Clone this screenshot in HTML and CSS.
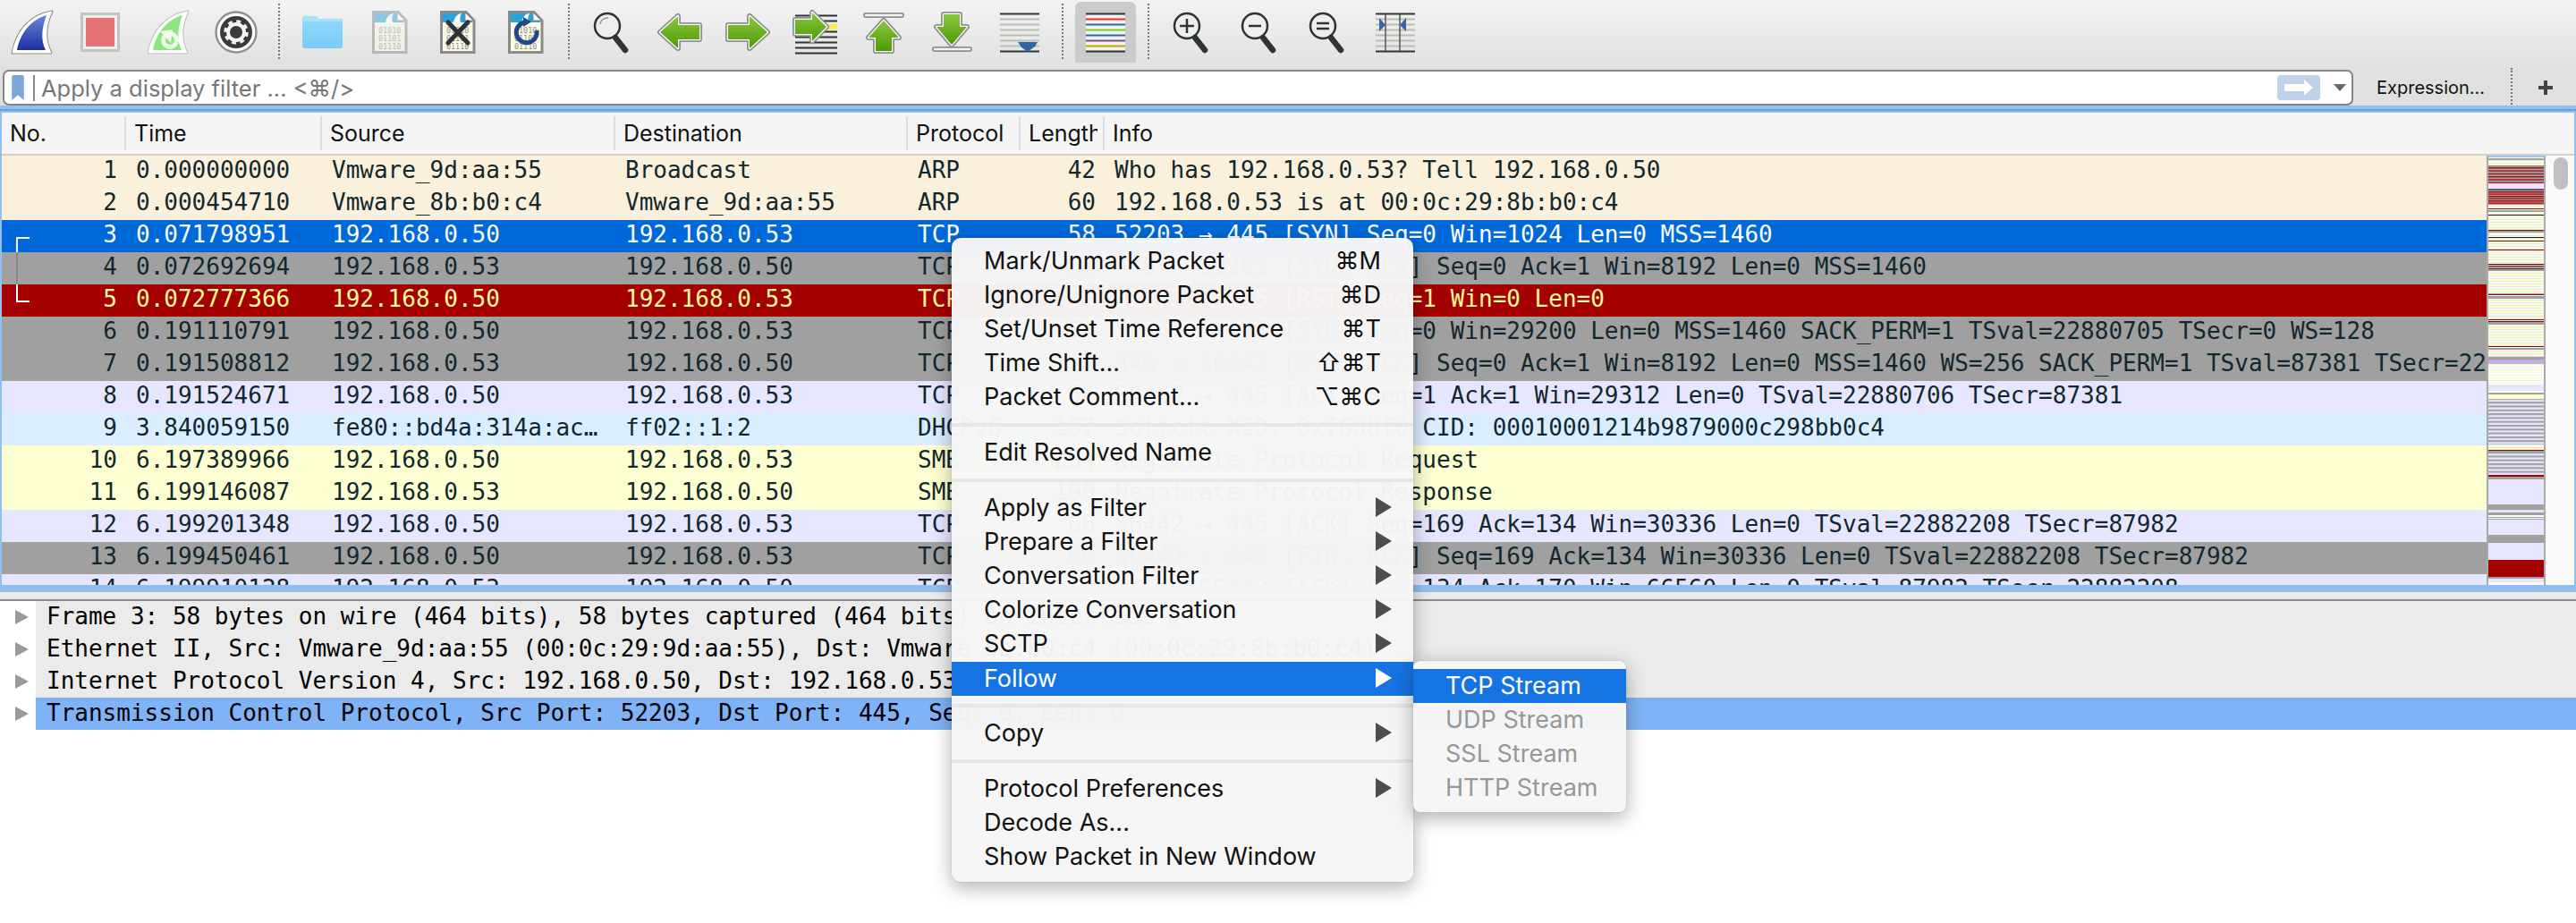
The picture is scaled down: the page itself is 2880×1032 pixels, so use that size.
FILE: index.html
```html
<!DOCTYPE html>
<html lang="en">
<head>
    <meta charset="UTF-8">
    <title>Wireshark</title>
    <link rel="stylesheet" href="styles.css">
</head>
<body>
    <svg class="defs" width="0" height="0">
        <defs>
            <linearGradient id="fin-blue" x1="0" y1="0" x2="0" y2="1"><stop offset="0" stop-color="#6a86dc"/><stop offset="1" stop-color="#1b2f9f"/></linearGradient>
            <linearGradient id="go-green" x1="0" y1="0" x2="0" y2="1"><stop offset="0" stop-color="#8ac73e"/><stop offset="1" stop-color="#4e9a06"/></linearGradient>
            <linearGradient id="folder-blue" x1="0" y1="0" x2="0" y2="1"><stop offset="0" stop-color="#93dafc"/><stop offset="1" stop-color="#78ccf8"/></linearGradient>
            <symbol id="arrow-left" viewBox="0 0 68 68">
                <path class="ar-out" d="M12 34 32 16V26H56V42H32V52Z"/>
                <path class="ar-in" d="M12 34 32 16V26H56V42H32V52Z"/>
                <path class="ar-fill" d="M12 34 32 16V26H56V42H32V52Z"/>
            </symbol>
            <symbol id="file" viewBox="0 0 68 68">
                <path class="file-page" d="M15.5 11.5H43L52 21V56.5H15.5Z"/>
                <path class="file-top" d="M17 13H42L50 21V23H17Z"/>
                <path class="file-fin" d="M29 23C30 17 34 13 38 13 36 17 36 20 37 23Z"/>
                <path class="file-ear" d="M42 12V21H51Z"/>
                <text class="file-bits" x="21" y="35">01010</text>
                <text class="file-bits" x="21" y="44">01101</text>
                <text class="file-bits" x="21" y="53">01110</text>
            </symbol>
            <symbol id="lens" viewBox="0 0 68 68">
                <circle class="lens-glass" cx="29" cy="27" r="14"/>
                <path class="lens-grip" d="M38 40 49 54"/>
            </symbol>
        </defs>
    </svg>

    <div class="toolbar">
        <div class="tool"><svg viewBox="0 0 68 68"><path class="fin-out" d="M12 57C17 32 32 15 56 11 49 25 47 42 55 57Z"/><path class="fin-in" d="M12 57C17 32 32 15 56 11 49 25 47 42 55 57Z"/><path fill="url(#fin-blue)" d="M17 54C21 34 33 20 50 15 45 28 43 42 49 54Z"/></svg></div>
        <div class="tool"><svg viewBox="0 0 68 68"><rect x="13.5" y="13.5" width="41" height="41" fill="#efefef" stroke="#c4c4c4" stroke-width="3"/><rect x="18" y="18" width="32" height="32" fill="#e57373"/></svg></div>
        <div class="tool"><svg viewBox="0 0 68 68"><path class="fin-out pale" d="M12 57C17 32 32 15 56 11 49 25 47 42 55 57Z"/><path class="fin-in" d="M12 57C17 32 32 15 56 11 49 25 47 42 55 57Z"/><path fill="#8ce680" d="M17 54C21 34 33 20 50 15 45 28 43 42 49 54Z"/><circle cx="36" cy="43" r="7.5" fill="none" stroke="#eefbea" stroke-width="5"/><path fill="#eefbea" d="M25 33 39 31 37 46Z"/></svg></div>
        <div class="tool"><svg viewBox="0 0 68 68"><circle cx="34" cy="34" r="22.5" fill="#fff" stroke="#929292" stroke-width="2.5"/><circle cx="34" cy="34" r="18" fill="#3b3b3b"/><circle cx="34" cy="34" r="11.5" fill="none" stroke="#f4f4f4" stroke-width="4.5" stroke-dasharray="4.6 4.43"/><circle cx="34" cy="34" r="9" fill="none" stroke="#f4f4f4" stroke-width="4"/></svg></div>
        <span class="tool-sep"></span>
        <div class="tool"><svg viewBox="0 0 68 68"><path fill="url(#folder-blue)" d="M12 19C12 17 13 16 15 16H26C28 16 29 17 30 19H55C56 19 57 20 57 21V50C57 51 56 52 55 52H14C13 52 12 51 12 50Z"/><path fill="#a6e0fb" d="M12 19C12 17 13 16 15 16H26C28 16 29 17 30 19H55C56 19 57 20 57 22H12Z"/></svg></div>
        <div class="tool"><svg viewBox="0 0 68 68" class="faded"><use href="#file"/></svg></div>
        <div class="tool"><svg viewBox="0 0 68 68"><use href="#file"/><path class="file-mark" d="M23 23 45 46M45 23 23 46"/></svg></div>
        <div class="tool"><svg viewBox="0 0 68 68"><use href="#file"/><path class="file-mark blue" d="M32 23A11.5 11.5 0 1 0 46 32"/><path fill="#204a87" d="M31 17 40 22.500 31 28Z"/></svg></div>
        <span class="tool-sep"></span>
        <div class="tool"><svg viewBox="0 0 68 68"><use href="#lens"/><path fill="none" stroke="#999" stroke-width="1.500" d="M21 25C22 20 26 18 30 18"/></svg></div>
        <div class="tool"><svg viewBox="0 0 68 68"><use href="#arrow-left"/></svg></div>
        <div class="tool"><svg viewBox="0 0 68 68"><use href="#arrow-left" transform="matrix(-1 0 0 1 68 0)"/></svg></div>
        <div class="tool"><svg viewBox="0 0 68 68">
            <path class="line dark" d="M11 15.500H58M11 21.500H58M11 33.500H58M11 39.500H58M11 45.500H58M11 51.500H58M11 57.500H58"/>
            <rect x="40" y="25" width="18" height="6" fill="#fce94f"/>
            <path class="ar-out" d="M46 28 30 12V20H11V36H30V44Z"/><path class="ar-in" d="M46 28 30 12V20H11V36H30V44Z"/><path class="ar-fill" d="M46 28 30 12V20H11V36H30V44Z"/>
        </svg></div>
        <div class="tool"><svg viewBox="0 0 68 68">
            <path class="ar-out thin" d="M14 15H54"/><path class="bar-in" d="M14 15H54"/>
            <path class="ar-out" d="M34 21 17 40H25V55H43V40H51Z"/><path class="ar-in" d="M34 21 17 40H25V55H43V40H51Z"/><path class="ar-fill" d="M34 21 17 40H25V55H43V40H51Z"/>
        </svg></div>
        <div class="tool"><svg viewBox="0 0 68 68">
            <path class="ar-out thin" d="M15 53H54"/><path class="bar-in" d="M15 53H54"/>
            <path class="ar-out" d="M34 48 17 28H25V14H43V28H51Z"/><path class="ar-in" d="M34 48 17 28H25V14H43V28H51Z"/><path class="ar-fill" d="M34 48 17 28H25V14H43V28H51Z"/>
        </svg></div>
        <div class="tool"><svg viewBox="0 0 68 68">
            <path class="line pale" d="M12 19.500H56M12 25.500H56M12 31.500H56M12 37.500H56M12 43.500H56M12 49.500H56"/>
            <path class="line dark" d="M12 13.500H56M12 55.500H56"/>
            <path fill="#3465a4" d="M32 45H54L51 50 43 56 36 51Z"/>
        </svg></div>
        <span class="tool-sep"></span>
        <div class="tool active"><svg viewBox="0 0 68 68">
            <rect x="12" y="13" width="44" height="43" fill="#f2f2f0"/>
            <path class="line dark" d="M12 13.500H56M12 55.500H56"/>
            <path class="line" stroke="#ef2929" d="M12 19.500H56"/>
            <path class="line" stroke="#3465a4" d="M12 25.500H56"/>
            <path class="line" stroke="#73d216" d="M12 31.500H56"/>
            <path class="line" stroke="#3465a4" d="M12 37.500H56"/>
            <path class="line" stroke="#75507b" d="M12 43.500H56"/>
            <path class="line" stroke="#c4a000" d="M12 49.500H56"/>
        </svg></div>
        <span class="tool-sep"></span>
        <div class="tool"><svg viewBox="0 0 68 68"><use href="#lens"/><path class="lens-mark" d="M21 27H37M29 19V35"/></svg></div>
        <div class="tool"><svg viewBox="0 0 68 68"><use href="#lens"/><path class="lens-mark" d="M22 27H36"/></svg></div>
        <div class="tool"><svg viewBox="0 0 68 68"><use href="#lens"/><path class="lens-mark" d="M22 24H36M22 30H36"/></svg></div>
        <div class="tool"><svg viewBox="0 0 68 68">
            <path class="line pale" d="M12 19.500H56M12 25.500H56M12 31.500H56M12 37.500H56M12 43.500H56M12 49.500H56"/>
            <path class="line dark" d="M12 13.500H56M12 55.500H56"/>
            <path stroke="#555" stroke-width="1.500" d="M23 14V55M39 14V55"/>
            <path fill="#3465a4" d="M16 18 23 26 16 33ZM46 18 39 26 46 33Z"/>
        </svg></div>
    </div>

    <div class="filterbar">
        <div class="filter-field">
            <svg class="bookmark" viewBox="0 0 16 30"><path fill="#7ba7d7" d="M1 2C1 1 2 0 3 0H13C14 0 15 1 15 2V29L8 23 1 29Z"/></svg>
            <span class="filter-text">Apply a display filter ... &lt;⌘/&gt;</span>
            <span class="apply-btn"><svg viewBox="0 0 34 18" width="34" height="18"><path fill="#fff" d="M1 6C1 5 2 5 2 5H23V0L33 9 23 18V13H2C2 13 1 13 1 12Z"/></svg></span>
            <span class="filter-drop"></span>
        </div>
        <span class="expr">Expression...</span>
        <span class="tool-sep short"></span>
        <span class="plus"></span>
    </div>

    <div class="packet-pane">
        <div class="list-head">
            <div class="hcell c-no"><span>No.</span></div>
            <div class="hcell c-time"><span>Time</span></div>
            <div class="hcell c-src"><span>Source</span></div>
            <div class="hcell c-dst"><span>Destination</span></div>
            <div class="hcell c-proto"><span>Protocol</span></div>
            <div class="hcell c-len"><span>Length</span></div>
            <div class="hcell c-info"><span>Info</span></div>
        </div>
        <div class="list-body">
            <div class="rows">
                <div class="row arp"><div class="c-no">1</div><div class="c-time">0.000000000</div><div class="c-src">Vmware_9d:aa:55</div><div class="c-dst">Broadcast</div><div class="c-proto">ARP</div><div class="c-len">42</div><div class="c-info">Who has 192.168.0.53? Tell 192.168.0.50</div></div>
                <div class="row arp"><div class="c-no">2</div><div class="c-time">0.000454710</div><div class="c-src">Vmware_8b:b0:c4</div><div class="c-dst">Vmware_9d:aa:55</div><div class="c-proto">ARP</div><div class="c-len">60</div><div class="c-info">192.168.0.53 is at 00:0c:29:8b:b0:c4</div></div>
                <div class="row picked"><div class="c-no"><i class="rel rel-first"></i>3</div><div class="c-time">0.071798951</div><div class="c-src">192.168.0.50</div><div class="c-dst">192.168.0.53</div><div class="c-proto">TCP</div><div class="c-len">58</div><div class="c-info">52203 → 445 [SYN] Seq=0 Win=1024 Len=0 MSS=1460</div></div>
                <div class="row syn"><div class="c-no"><i class="rel rel-mid"></i>4</div><div class="c-time">0.072692694</div><div class="c-src">192.168.0.53</div><div class="c-dst">192.168.0.50</div><div class="c-proto">TCP</div><div class="c-len">58</div><div class="c-info">445 → 52203 [SYN, ACK] Seq=0 Ack=1 Win=8192 Len=0 MSS=1460</div></div>
                <div class="row rst"><div class="c-no"><i class="rel rel-last"></i>5</div><div class="c-time">0.072777366</div><div class="c-src">192.168.0.50</div><div class="c-dst">192.168.0.53</div><div class="c-proto">TCP</div><div class="c-len">54</div><div class="c-info">52203 → 445 [RST] Seq=1 Win=0 Len=0</div></div>
                <div class="row syn"><div class="c-no">6</div><div class="c-time">0.191110791</div><div class="c-src">192.168.0.50</div><div class="c-dst">192.168.0.53</div><div class="c-proto">TCP</div><div class="c-len">74</div><div class="c-info">56442 → 445 [SYN] Seq=0 Win=29200 Len=0 MSS=1460 SACK_PERM=1 TSval=22880705 TSecr=0 WS=128</div></div>
                <div class="row syn"><div class="c-no">7</div><div class="c-time">0.191508812</div><div class="c-src">192.168.0.53</div><div class="c-dst">192.168.0.50</div><div class="c-proto">TCP</div><div class="c-len">74</div><div class="c-info">445 → 56442 [SYN, ACK] Seq=0 Ack=1 Win=8192 Len=0 MSS=1460 WS=256 SACK_PERM=1 TSval=87381 TSecr=22880705</div></div>
                <div class="row ack"><div class="c-no">8</div><div class="c-time">0.191524671</div><div class="c-src">192.168.0.50</div><div class="c-dst">192.168.0.53</div><div class="c-proto">TCP</div><div class="c-len">66</div><div class="c-info">56442 → 445 [ACK] Seq=1 Ack=1 Win=29312 Len=0 TSval=22880706 TSecr=87381</div></div>
                <div class="row dhcp"><div class="c-no">9</div><div class="c-time">3.840059150</div><div class="c-src">fe80::bd4a:314a:ac…</div><div class="c-dst">ff02::1:2</div><div class="c-proto">DHCPv6</div><div class="c-len">157</div><div class="c-info">Solicit XID: 0xf608f0 CID: 00010001214b9879000c298bb0c4</div></div>
                <div class="row smb"><div class="c-no">10</div><div class="c-time">6.197389966</div><div class="c-src">192.168.0.50</div><div class="c-dst">192.168.0.53</div><div class="c-proto">SMB</div><div class="c-len">234</div><div class="c-info">Negotiate Protocol Request</div></div>
                <div class="row smb"><div class="c-no">11</div><div class="c-time">6.199146087</div><div class="c-src">192.168.0.53</div><div class="c-dst">192.168.0.50</div><div class="c-proto">SMB</div><div class="c-len">199</div><div class="c-info">Negotiate Protocol Response</div></div>
                <div class="row ack"><div class="c-no">12</div><div class="c-time">6.199201348</div><div class="c-src">192.168.0.50</div><div class="c-dst">192.168.0.53</div><div class="c-proto">TCP</div><div class="c-len">66</div><div class="c-info">56442 → 445 [ACK] Seq=169 Ack=134 Win=30336 Len=0 TSval=22882208 TSecr=87982</div></div>
                <div class="row syn"><div class="c-no">13</div><div class="c-time">6.199450461</div><div class="c-src">192.168.0.50</div><div class="c-dst">192.168.0.53</div><div class="c-proto">TCP</div><div class="c-len">66</div><div class="c-info">56442 → 445 [FIN, ACK] Seq=169 Ack=134 Win=30336 Len=0 TSval=22882208 TSecr=87982</div></div>
                <div class="row ack"><div class="c-no">14</div><div class="c-time">6.199910128</div><div class="c-src">192.168.0.53</div><div class="c-dst">192.168.0.50</div><div class="c-proto">TCP</div><div class="c-len">66</div><div class="c-info">445 → 56442 [ACK] Seq=134 Ack=170 Win=66560 Len=0 TSval=87982 TSecr=22882208</div></div>
            </div>
            <svg class="minimap" viewBox="0 0 64 480" preserveAspectRatio="none">
                <defs>
                    <pattern id="st-red" width="64" height="3.300" patternUnits="userSpaceOnUse"><rect width="64" height="3.300" fill="#a0a0a0"/><rect width="64" height="1.200" fill="#a40000"/></pattern>
                    <pattern id="st-redfine" width="64" height="2.500" patternUnits="userSpaceOnUse"><rect width="64" height="2.500" fill="#b0a0a0"/><rect width="64" height="1.300" fill="#a40000"/></pattern>
                    <pattern id="st-yel" width="64" height="3" patternUnits="userSpaceOnUse"><rect width="64" height="3" fill="#feffd0"/><rect y="2" width="64" height="1" fill="#e7e6ff"/></pattern>
                    <pattern id="st-gray" width="64" height="4.300" patternUnits="userSpaceOnUse"><rect width="64" height="4.300" fill="#e7e6ff"/><rect width="64" height="2" fill="#a0a0a0"/></pattern>
                </defs>
                <rect width="64" height="480" fill="#fff"/>
                <rect y="0" width="64" height="2" fill="#9cc4ee"/><rect y="2" width="64" height="1" fill="#fff"/><rect y="3" width="64" height="2" fill="#a0a0a0"/>
                <rect y="5" width="64" height="6" fill="url(#st-yel)"/>
                <rect y="11" width="64" height="20" fill="url(#st-red)"/>
                <rect y="31" width="64" height="6" fill="#f8e0ff"/>
                <rect y="37" width="64" height="2" fill="#56606a"/>
                <rect y="39" width="64" height="16" fill="url(#st-redfine)"/>
                <rect y="55" width="64" height="4" fill="url(#st-yel)"/><rect y="59" width="64" height="1" fill="#a40000"/><rect y="61" width="64" height="2" fill="#a0a0a0"/>
                <rect y="63" width="64" height="20" fill="url(#st-yel)"/><rect y="66" width="64" height="1" fill="#12272e"/>
                <rect y="83" width="64" height="1" fill="#a40000"/><rect y="84" width="64" height="2" fill="#a0a0a0"/>
                <rect y="86" width="64" height="35" fill="url(#st-yel)"/><rect y="91" width="64" height="1" fill="#12272e"/><rect y="95" width="64" height="1" fill="#a40000"/><rect y="105" width="64" height="1" fill="#a40000"/>
                <rect y="121" width="64" height="1" fill="#a40000"/><rect y="122" width="64" height="2" fill="#a0a0a0"/><rect y="124" width="64" height="1" fill="#a40000"/><rect y="126" width="64" height="1" fill="#12272e"/><rect y="127" width="64" height="2" fill="#a0a0a0"/>
                <rect y="129" width="64" height="25" fill="url(#st-yel)"/>
                <rect y="154" width="64" height="1" fill="#a0a0a0"/><rect y="155" width="64" height="1" fill="#a40000"/><rect y="157" width="64" height="3" fill="#a0a0a0"/>
                <rect y="160" width="64" height="23" fill="url(#st-yel)"/>
                <rect y="183" width="64" height="1" fill="#a40000"/><rect y="185" width="64" height="1" fill="#a40000"/><rect y="186" width="64" height="3" fill="#a0a0a0"/>
                <rect y="189" width="64" height="24" fill="url(#st-yel)"/>
                <rect y="213" width="64" height="1" fill="#a40000"/><rect y="215" width="64" height="2" fill="#a0a0a0"/>
                <rect y="217" width="64" height="8" fill="url(#st-yel)"/>
                <rect y="225" width="64" height="3" fill="#a0a0a0"/><rect y="228" width="64" height="2" fill="#c9a0f2"/><rect y="230" width="64" height="3" fill="#b8b8c8"/>
                <rect y="233" width="64" height="23" fill="url(#st-yel)" opacity=".6"/>
                <rect y="256" width="64" height="7" fill="#e7e6ff"/>
                <rect y="263" width="64" height="1" fill="#feffd0"/><rect y="265" width="64" height="2" fill="#a0a0a0"/><rect y="267" width="64" height="5" fill="#feffd0"/>
                <rect y="272" width="64" height="51" fill="url(#st-gray)"/>
                <rect y="323" width="64" height="6" fill="url(#st-yel)"/>
                <rect y="329" width="64" height="1" fill="#a40000"/><rect y="330" width="64" height="3" fill="#a0a0a0"/>
                <rect y="333" width="64" height="24" fill="url(#st-gray)"/>
                <rect y="357" width="64" height="2" fill="#a40000"/><rect y="359" width="64" height="3" fill="#a0a0a0"/>
                <rect y="362" width="64" height="28" fill="#e7e6ff"/>
                <rect y="390" width="64" height="6" fill="#a0a0a0"/>
                <rect y="396" width="64" height="3" fill="#e7e6ff"/><rect y="399" width="64" height="3" fill="#a0a0a0"/><rect y="404" width="64" height="1" fill="#a0a0a0"/><rect y="406" width="64" height="1" fill="#a0a0a0"/>
                <rect y="407" width="64" height="17" fill="#e7e6ff"/>
                <rect y="424" width="64" height="9" fill="#a0a0a0"/>
                <rect y="433" width="64" height="19" fill="#e7e6ff"/>
                <rect y="452" width="64" height="19" fill="#a40000"/>
                <rect y="471" width="64" height="2" fill="#a0a0a0"/><rect y="473" width="64" height="4" fill="#e7e6ff"/>
            </svg>
            <div class="scroll"><div class="scroll-thumb"></div></div>
        </div>
    </div>

    <div class="pane-gap"></div>

    <div class="detail-pane">
        <div class="tree-row"><span class="twist"></span><div class="tree-text">Frame 3: 58 bytes on wire (464 bits), 58 bytes captured (464 bits) on interface 0</div></div>
        <div class="tree-row"><span class="twist"></span><div class="tree-text">Ethernet II, Src: Vmware_9d:aa:55 (00:0c:29:9d:aa:55), Dst: Vmware_8b:b0:c4 (00:0c:29:8b:b0:c4)</div></div>
        <div class="tree-row"><span class="twist"></span><div class="tree-text">Internet Protocol Version 4, Src: 192.168.0.50, Dst: 192.168.0.53</div></div>
        <div class="tree-row"><span class="twist"></span><div class="tree-text picked">Transmission Control Protocol, Src Port: 52203, Dst Port: 445, Seq: 0, Len: 0</div></div>
    </div>

    <div class="menu main-menu">
        <div class="item"><span>Mark/Unmark Packet</span><span class="keys">⌘M</span></div>
        <div class="item"><span>Ignore/Unignore Packet</span><span class="keys">⌘D</span></div>
        <div class="item"><span>Set/Unset Time Reference</span><span class="keys">⌘T</span></div>
        <div class="item"><span>Time Shift...</span><span class="keys">⇧⌘T</span></div>
        <div class="item"><span>Packet Comment...</span><span class="keys">⌥⌘C</span></div>
        <div class="menu-sep"></div>
        <div class="item"><span>Edit Resolved Name</span></div>
        <div class="menu-sep"></div>
        <div class="item"><span>Apply as Filter</span><span class="more"></span></div>
        <div class="item"><span>Prepare a Filter</span><span class="more"></span></div>
        <div class="item"><span>Conversation Filter</span><span class="more"></span></div>
        <div class="item"><span>Colorize Conversation</span><span class="more"></span></div>
        <div class="item"><span>SCTP</span><span class="more"></span></div>
        <div class="item on"><span>Follow</span><span class="more"></span></div>
        <div class="menu-sep"></div>
        <div class="item"><span>Copy</span><span class="more"></span></div>
        <div class="menu-sep"></div>
        <div class="item"><span>Protocol Preferences</span><span class="more"></span></div>
        <div class="item"><span>Decode As...</span></div>
        <div class="item"><span>Show Packet in New Window</span></div>
    </div>

    <div class="menu sub-menu">
        <div class="item on"><span>TCP Stream</span></div>
        <div class="item off"><span>UDP Stream</span></div>
        <div class="item off"><span>SSL Stream</span></div>
        <div class="item off"><span>HTTP Stream</span></div>
    </div>
</body>
</html>
```

FILE: styles.css
```css
html, body {
    margin: 0;
    height: 1032px;
    overflow: hidden;
    background-color: #fff;
}
body {
    position: relative;
    display: flex;
    flex-direction: column;
    font-family: Inter, "DejaVu Sans", sans-serif;
    color: #111;
}
.defs {
    position: absolute;
}

/* main toolbar */
.toolbar {
    height: 78px;
    flex: none;
    box-sizing: border-box;
    display: flex;
    align-items: flex-start;
    gap: 8px;
    padding: 2px 0 0 2px;
    background: linear-gradient(#f3f3f3, #e0e0e0);
}
.tool {
    width: 68px;
    height: 68px;
    flex: none;
    border-radius: 6px 6px 0 0;
}
.tool.active {
    background-color: #cbcbcb;
}
.tool svg {
    display: block;
    width: 68px;
    height: 68px;
}
.tool-sep {
    flex: none;
    width: 0;
    height: 62px;
    margin: 2px 5px 0;
    border-left: 2px dotted #777;
}
.tool-sep.short {
    height: 44px;
    margin: 0;
}
.faded {
    opacity: .5;
}

/* icon parts */
.fin-out { fill: none; stroke: #8d8d8d; stroke-width: 3; stroke-linejoin: round; }
.fin-out.pale { stroke: #bdbdbd; }
.fin-in { fill: #fff; stroke: #fff; stroke-width: 1; }
.ar-out { fill: none; stroke: #8f8f8f; stroke-width: 6; stroke-linejoin: round; stroke-linecap: round; }
.ar-out.thin { stroke-width: 6; }
.ar-in { fill: none; stroke: #fff; stroke-width: 2.5; stroke-linejoin: round; }
.ar-fill { fill: url(#go-green); }
.bar-in { fill: none; stroke: #f4f4f4; stroke-width: 2.500; stroke-linecap: round; }
.line { fill: none; stroke-width: 2.200; }
.line.dark { stroke: #2e3436; }
.line.pale { stroke: #babdb6; }
.file-page { fill: #fcfbe6; stroke: #8a8a8a; stroke-width: 3; }
.file-top { fill: #2ba1dd; }
.file-fin { fill: #fff; }
.file-ear { fill: #fff; stroke: #8a8a8a; stroke-width: 1; }
.file-bits { font-family: "DejaVu Sans Mono", monospace; font-size: 8.400px; fill: #8e8e8e; }
.file-mark { fill: none; stroke: #2e3436; stroke-width: 5; stroke-linecap: round; }
.file-mark.blue { stroke: #204a87; stroke-linecap: butt; }
.lens-glass { fill: #eeeeec; stroke: #2e3436; stroke-width: 2.500; }
.lens-grip { fill: none; stroke: #2e3436; stroke-width: 6.500; stroke-linecap: round; }
.lens-mark { fill: none; stroke: #2e3436; stroke-width: 2.500; }

/* display filter */
.filterbar {
    height: 40px;
    flex: none;
    display: flex;
    align-items: center;
    padding-left: 3px;
    background-color: #e0e0e0;
}
.filter-field {
    width: 2628px;
    height: 40px;
    box-sizing: border-box;
    display: flex;
    align-items: center;
    background-color: #fff;
    border: 2px solid #858585;
    border-radius: 7px;
}
.bookmark {
    width: 16px;
    height: 29px;
    margin-left: 7px;
    padding-right: 9px;
    border-right: 2px solid #8a8a8a;
    flex: none;
}
.filter-text {
    flex: 1;
    margin-left: 7px;
    font-size: 25.500px;
    color: #777;
}
.apply-btn {
    width: 48px;
    height: 28px;
    display: flex;
    align-items: center;
    justify-content: center;
    background-color: #bed2e9;
    border-radius: 4px;
}
.filter-drop {
    width: 0;
    height: 0;
    margin: 0 6px 0 15px;
    border-left: 7px solid transparent;
    border-right: 7px solid transparent;
    border-top: 8px solid #666;
}
.expr {
    margin-left: 26px;
    width: 150px;
    font-size: 20px;
    color: #111;
}
.plus {
    position: relative;
    width: 16px;
    height: 16px;
    margin-left: 29px;
    background:
        linear-gradient(#444, #444) center / 16px 4px no-repeat,
        linear-gradient(#444, #444) center / 4px 16px no-repeat;
}

/* packet list */
.packet-pane {
    height: 544px;
    flex: none;
    box-sizing: border-box;
    display: flex;
    flex-direction: column;
    border: solid #93bfee;
    border-width: 8px 2px;
    background-color: #fff;
    position: relative;
}
.packet-pane::before {
    content: "";
    position: absolute;
    left: -2px;
    right: -2px;
    top: -4px;
    height: 2px;
    background-color: #6f9fdc;
}
.list-head {
    height: 48px;
    flex: none;
    box-sizing: border-box;
    display: flex;
    align-items: center;
    background-color: #f5f5f5;
    border-bottom: 2px solid #d4d0c8;
    font-size: 25px;
}
.hcell {
    height: 38px;
    box-sizing: border-box;
    display: flex;
    align-items: center;
    padding-left: 9px;
    padding-right: 6px;
    border-right: 2px solid #dcdcdc;
}
.hcell span {
    overflow: hidden;
    white-space: nowrap;
}
.hcell.c-info {
    border-right: 0;
}
.c-no { width: 139px; }
.c-time { width: 219px; }
.c-src { width: 328px; }
.c-dst { width: 327px; }
.c-proto { width: 126px; }
.c-len { width: 94px; }
.c-info { flex: 1; min-width: 0; }

.list-body {
    flex: 1;
    min-height: 0;
    display: flex;
}
.rows {
    width: 2778px;
    flex: none;
    overflow: hidden;
    font-family: "DejaVu Sans Mono", monospace;
    font-size: 26px;
}
.row {
    height: 36px;
    line-height: 33px;
    display: flex;
    white-space: nowrap;
    color: #12272e;
}
.row > div {
    box-sizing: border-box;
    padding-left: 11px;
    overflow: hidden;
    position: relative;
}
.row > .c-no, .row > .c-len {
    padding: 0 10px 0 0;
    text-align: right;
}
.row.arp { background-color: #faf0dc; }
.row.picked { background-color: #0069d9; color: #fff; }
.row.syn { background-color: #a0a0a0; }
.row.rst { background-color: #a40000; color: #fffc9c; }
.row.ack { background-color: #e7e6ff; }
.row.dhcp { background-color: #daeeff; }
.row.smb { background-color: #feffd0; }

/* related packet bracket */
.rel {
    position: absolute;
    left: 16px;
    width: 15px;
    box-sizing: border-box;
    border-left: 2px solid #fff;
}
.rel-first {
    top: 19px;
    bottom: 0;
    border-top: 2px solid #fff;
}
.rel-mid {
    top: 0;
    bottom: 0;
    width: 0;
    border-left-color: #8a8a8a;
}
.rel-last {
    top: 0;
    height: 20px;
    border-bottom: 2px solid #fff;
}

.minimap {
    width: 66px;
    height: 480px;
    flex: none;
    box-sizing: border-box;
    border: solid #aaa;
    border-width: 0 2px;
}
.scroll {
    flex: 1;
    padding: 2px 7px 0 9px;
    background-color: #fafafa;
}
.scroll-thumb {
    height: 36px;
    background-color: #c0c0c0;
    border-radius: 8px;
}

/* packet details */
.pane-gap {
    height: 8px;
    flex: none;
    background-color: #ebebeb;
    border-bottom: 2px solid #8b8b8b;
}
.detail-pane {
    flex: 1;
    font-family: "DejaVu Sans Mono", monospace;
    font-size: 26px;
    color: #000;
}
.tree-row {
    height: 36px;
    line-height: 34px;
    display: flex;
    white-space: nowrap;
}
.twist {
    width: 40px;
    flex: none;
    box-sizing: border-box;
    padding: 10px 0 0 17px;
}
.twist::before {
    content: "";
    display: block;
    width: 0;
    height: 0;
    border-top: 8px solid transparent;
    border-bottom: 8px solid transparent;
    border-left: 15px solid #9a9a9a;
}
.tree-text {
    flex: 1;
    padding-left: 12px;
    background-color: #ebebeb;
}
.tree-text.picked {
    background-color: #7fb3f5;
}

/* context menus */
.menu {
    position: absolute;
    box-sizing: border-box;
    background-color: rgba(246, 246, 246, .975);
    box-shadow: 0 6px 22px rgba(0, 0, 0, .32), 0 0 1px rgba(0, 0, 0, .4);
    font-size: 27px;
    color: #111;
}
.main-menu {
    left: 1064px;
    top: 266px;
    width: 516px;
    height: 720px;
    padding-top: 7px;
    border-radius: 10px;
}
.sub-menu {
    left: 1580px;
    top: 739px;
    width: 238px;
    height: 169px;
    padding-top: 9px;
    border-radius: 8px;
}
.item {
    height: 38px;
    box-sizing: border-box;
    display: flex;
    align-items: center;
    justify-content: space-between;
    padding: 0 36px 2px 36px;
    white-space: nowrap;
}
.item.on {
    background-color: #1673e2;
    color: #fff;
}
.item.off {
    color: #979797;
}
.main-menu .item.on {
    margin-top: 1px;
    margin-bottom: -1px;
}
.more {
    width: 0;
    height: 0;
    margin-right: -12px;
    border-top: 11px solid transparent;
    border-bottom: 11px solid transparent;
    border-left: 18px solid #4d4d4d;
}
.item.on .more {
    border-left-color: #fff;
}
.menu-sep {
    height: 24px;
    box-sizing: border-box;
    padding-top: 10px;
}
.menu-sep::before {
    content: "";
    display: block;
    height: 4px;
    background-color: #e6e6e6;
}
```
